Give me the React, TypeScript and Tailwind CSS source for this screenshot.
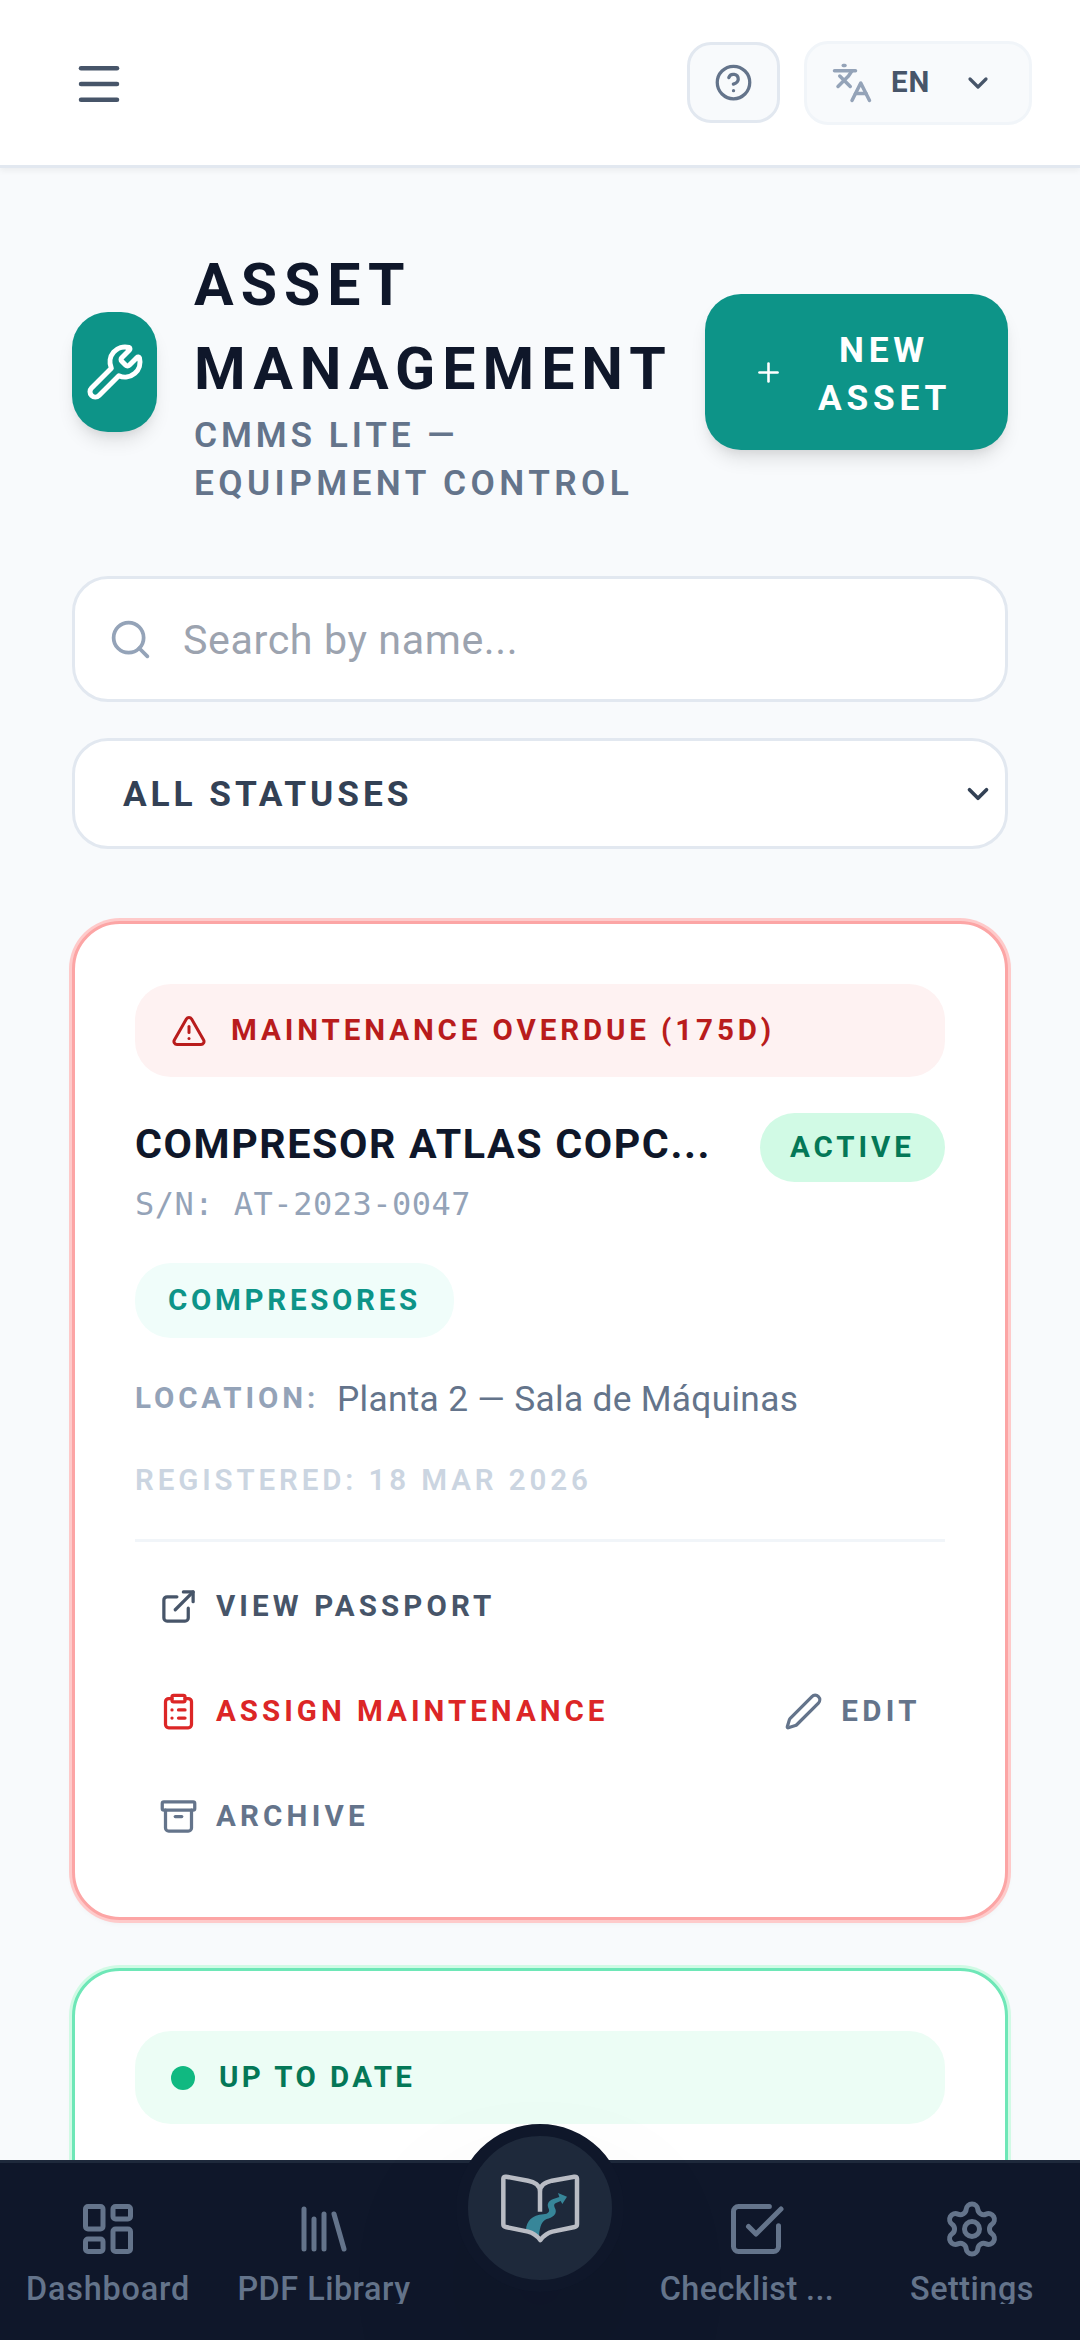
import type { ReactNode } from "react";
import {
  Archive,
  ChevronDown,
  CircleHelp,
  ClipboardList,
  ExternalLink,
  Languages,
  LayoutDashboard,
  Library,
  Menu,
  Plus,
  Search,
  Settings,
  SquareCheckBig,
  TriangleAlert,
  Wrench,
} from "lucide-react";

const Header = () => (
  <header className="relative z-10 flex h-[168px] shrink-0 items-center justify-between border-b-[3px] border-[#e2e8f0] bg-white pr-12 pl-[72px] shadow-[0_3px_6px_0_rgba(0,0,0,0.05)]">
    <Menu className="mt-[3px] size-[54px] text-[#475569]" />
    <div className="flex items-center gap-6">
      <button className="flex h-[81px] w-[93px] items-center justify-center rounded-3xl border-[3px] border-[#e2e8f0] bg-[#f8fafc]">
        <CircleHelp className="size-[39px] text-[#64748b]" />
      </button>
      <div className="flex h-[84px] w-[228px] items-center rounded-3xl border-[3px] border-[#f1f5f9] bg-[#f8fafc] pl-6">
        <Languages className="size-[42px] text-[#94a3b8]" />
        <span className="ml-[18px] w-[71px] text-[29.5px] font-bold tracking-[1px] text-[#475569]">
          EN
        </span>
        <ChevronDown className="size-8 text-[#475569]" strokeWidth={2.4} />
      </div>
    </div>
  </header>
);

const PageTitle = () => (
  <div className="flex h-[264px] items-center">
    <div className="flex h-[120px] w-[85px] shrink-0 items-center justify-center rounded-[36px] bg-[#0d9488] shadow-[0_12px_18px_-3px_rgba(0,0,0,0.1),0_6px_12px_-6px_rgba(0,0,0,0.1)]">
      <Wrench className="size-[60px] shrink-0 text-white" />
    </div>
    <div className="ml-[37px] w-[511px] shrink-0 pt-[5px]">
      <h1 className="text-[59px] leading-[84px] font-bold tracking-[7px] text-[#0f172a]">
        ASSET
        <br />
        MANAGEMENT
      </h1>
      <p className="text-[35.3px] leading-[48px] font-semibold tracking-[4.4px] text-[#64748b]">
        <span className="tracking-[3.9px]">CMMS LITE —</span>
        <br />
        EQUIPMENT CONTROL
      </p>
    </div>
    <button className="flex h-[156px] w-[303px] shrink-0 items-center rounded-[36px] bg-[#0d9488] pl-12 text-white shadow-[0_12px_18px_-3px_rgba(0,0,0,0.1),0_6px_12px_-6px_rgba(0,0,0,0.1)]">
      <Plus className="size-[31px] shrink-0" />
      <span className="ml-[34px] w-[132px] pt-[3px] text-center text-[35.3px] leading-[48px] font-bold tracking-[4.8px]">
        NEW
        <br />
        ASSET
      </span>
    </button>
  </div>
);

const Filters = () => (
  <div className="mt-[72px] flex flex-col gap-9">
    <div className="flex h-[126px] items-center rounded-[36px] border-[3px] border-[#e2e8f0] bg-white pl-[33px]">
      <Search className="size-[45px] text-[#94a3b8]" />
      <span className="ml-[30px] pt-[3px] text-[41.2px] tracking-[0.6px] text-[#9ca3af]">
        Search by name...
      </span>
    </div>
    <div className="flex h-[111px] items-center justify-between rounded-[36px] border-[3px] border-[#e2e8f0] bg-white pr-[10px] pl-12">
      <span className="pt-[2px] text-[35.3px] font-bold tracking-[3.9px] text-[#334155]">
        ALL STATUSES
      </span>
      <ChevronDown className="size-[34px] text-[#334155]" strokeWidth={2.6} />
    </div>
  </div>
);

const PencilIcon = () => (
  <svg
    xmlns="http://www.w3.org/2000/svg"
    fill="none"
    viewBox="0 0 24 24"
    strokeWidth={2}
    stroke="currentColor"
    className="size-[39px]"
  >
    <path
      strokeLinecap="round"
      strokeLinejoin="round"
      d="M21.174 6.812a1 1 0 0 0-3.986-3.987L3.842 16.174a2 2 0 0 0-.5.83l-1.321 4.352a.5.5 0 0 0 .623.622l4.353-1.32a2 2 0 0 0 .83-.497z"
    />
  </svg>
);

const CardAction = ({
  icon,
  label,
  className,
}: {
  icon: ReactNode;
  label: string;
  className: string;
}) => (
  <button className={`flex h-[81px] items-center gap-[18px] px-6 ${className}`}>
    {icon}
    <span className="text-[29.5px] font-bold">{label}</span>
  </button>
);

const OverdueCard = () => (
  <article className="mt-[72px] flex shrink-0 flex-col rounded-[48px] border-[3px] border-[#fca5a5] bg-white p-[60px] shadow-[0_0_0_3px_#fecaca,0_3px_6px_0_rgba(0,0,0,0.05)]">
    <div className="flex h-[93px] items-center gap-6 rounded-[36px] bg-[#fef2f2] px-9 text-[#b91c1c]">
      <TriangleAlert className="size-9" />
      <span className="text-[29.5px] font-bold tracking-[3.9px]">
        MAINTENANCE OVERDUE (175D)
      </span>
    </div>

    <div className="mt-9 flex items-start justify-between">
      <div>
        <h3 className="text-[41.2px] leading-[63px] font-bold tracking-[1.6px] text-[#0f172a]">
          COMPRESOR ATLAS COPC...
        </h3>
        <p className="mt-1.5 font-['DejaVu_Sans_Mono',monospace] text-[32px] leading-[45px] tracking-[0.5px] text-[#94a3b8]">
          S/N: AT-2023-0047
        </p>
      </div>
      <span className="flex h-[69px] w-[185px] items-center rounded-full bg-[#d1fae5] pl-[30px] text-[29.5px] font-bold tracking-[3.9px] text-[#047857]">
        ACTIVE
      </span>
    </div>

    <span className="mt-9 flex h-[75px] w-[319px] items-center rounded-[36px] bg-[#f0fdfa] pl-[33px] text-[29.5px] font-bold tracking-[3.7px] text-[#0d9488]">
      COMPRESORES
    </span>

    <div className="mt-9 flex h-12 items-center">
      <span className="w-[202px] text-[29.5px] font-bold tracking-[3.9px] text-[#94a3b8]">
        LOCATION:
      </span>
      <span className="pt-[2px] text-[35.3px] tracking-[0.3px] text-[#64748b]">
        Planta 2 — Sala de Máquinas
      </span>
    </div>

    <p className="mt-9 text-[29.5px] leading-[45px] font-semibold tracking-[3.9px] text-[#cbd5e1]">
      REGISTERED: 18 MAR 2026
    </p>

    <div className="mt-9 flex flex-col gap-6 border-t-[3px] border-[#f1f5f9] pt-6">
      <div className="flex">
        <CardAction
          icon={<ExternalLink className="size-[39px]" />}
          label="VIEW PASSPORT"
          className="tracking-[4.1px] text-[#475569]"
        />
      </div>
      <div className="flex justify-between">
        <CardAction
          icon={<ClipboardList className="size-[39px]" />}
          label="ASSIGN MAINTENANCE"
          className="tracking-[4px] text-[#dc2626]"
        />
        <CardAction
          icon={<PencilIcon />}
          label="EDIT"
          className="tracking-[4.4px] text-[#64748b]"
        />
      </div>
      <div className="flex">
        <CardAction
          icon={<Archive className="size-[39px]" />}
          label="ARCHIVE"
          className="tracking-[4.2px] text-[#64748b]"
        />
      </div>
    </div>
  </article>
);

const UpToDateCard = () => (
  <article className="mt-12 h-[600px] shrink-0 rounded-[48px] border-[3px] border-[#6ee7b7] bg-white p-[60px] shadow-[0_0_0_3px_#d1fae5,0_3px_6px_0_rgba(0,0,0,0.05)]">
    <div className="flex h-[93px] items-center gap-6 rounded-[36px] bg-[#ecfdf5] px-9 text-[#047857]">
      <span className="size-6 rounded-full bg-[#10b981]" />
      <span className="text-[29.5px] font-bold tracking-[3.4px]">
        UP TO DATE
      </span>
    </div>
  </article>
);

const NavItem = ({
  icon,
  label,
  className,
}: {
  icon: ReactNode;
  label: string;
  className: string;
}) => (
  <a className="flex w-[216px] flex-col items-center pt-9 text-[#64748b]">
    {icon}
    <span
      className={`mt-3 h-[33px] overflow-hidden text-[32.4px] leading-[36px] font-medium whitespace-nowrap ${className}`}
    >
      {label}
    </span>
  </a>
);

const BookLogo = () => (
  <svg viewBox="300 190 240 210" className="h-[70px] w-20" fill="none">
    <path
      d="M378 360C380 334 396 317 430 314C446 312 450 305 446 297C440 284 444 274 460 268L478 262L474 250L501 261L487 283L482 274L468 280C459 284 463 290 467 300C470 316 457 323 440 328C425 334 420 350 417 378Z"
      fill="#378699"
    />
    <path
      d="M420 306V246C420 226 402 216 384 213L318 201Q310 200 310 207V344Q310 351 317 352L384 366Q405 371 421 391Q437 371 457 366L524 352Q531 351 531 344V207Q531 200 523 201L456 213C438 217 420 226 420 246"
      stroke="#b9bcc4"
      strokeWidth="13.5"
      strokeLinejoin="round"
    />
  </svg>
);

const BottomNav = () => (
  <nav className="absolute inset-x-0 bottom-0 z-20 flex h-[180px] border-t-[3px] border-[#1e293b] bg-[#0f172a]">
    <NavItem
      icon={<LayoutDashboard className="size-[60px]" />}
      label="Dashboard"
      className="tracking-[0.8px]"
    />
    <NavItem
      icon={<Library className="size-[60px]" />}
      label="PDF Library"
      className="tracking-[0.5px]"
    />
    <div className="flex w-[216px] justify-center">
      <button className="-mt-[39px] flex size-[168px] items-center justify-center rounded-full border-[12px] border-[#0f172a] bg-[#1e293b] shadow-[0_75px_150px_-36px_rgba(0,0,0,0.25)]">
        <BookLogo />
      </button>
    </div>
    <NavItem
      icon={<SquareCheckBig className="size-[60px]" />}
      label="Checklist ..."
      className="pr-[18px] tracking-[0.4px]"
    />
    <NavItem
      icon={<Settings className="size-[60px]" />}
      label="Settings"
      className="tracking-[0.5px]"
    />
  </nav>
);

export default function App() {
  return (
    <div className="relative flex h-[2340px] w-[1080px] flex-col overflow-hidden bg-[#f8fafc] font-[Roboto,sans-serif]">
      <Header />
      <main className="flex min-h-0 flex-1 flex-col overflow-hidden px-[72px] pt-[72px]">
        <PageTitle />
        <Filters />
        <OverdueCard />
        <UpToDateCard />
      </main>
      <BottomNav />
    </div>
  );
}
